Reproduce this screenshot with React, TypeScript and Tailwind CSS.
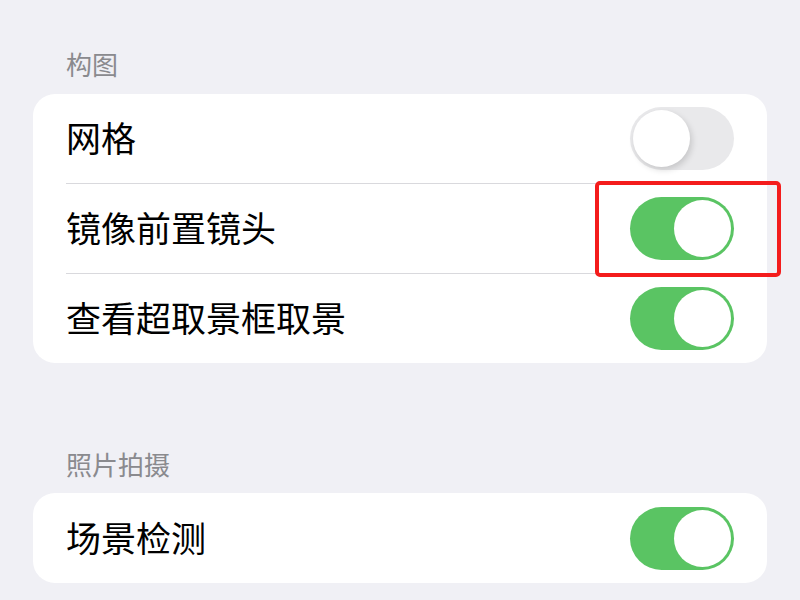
const font = { fontFamily: '"Noto Sans CJK SC", "Noto Sans", sans-serif' };

function Toggle({ on, highlight }: { on: boolean; highlight?: boolean }) {
  return (
    <div className="relative">
      <div
        className={
          "relative h-[63px] w-[104px] rounded-full " +
          (on ? "bg-[#5ac463]" : "bg-[#e9e9eb]")
        }
      >
        <div
          className={
            "absolute top-[3px] h-[57px] w-[57px] rounded-full bg-white " +
            (on ? "right-[3px]" : "left-[3px] shadow-[2px_3px_6px_rgba(0,0,0,0.15)]")
          }
        />
      </div>
      {highlight && (
        <div className="absolute -left-[35px] -right-[47px] -top-[16px] -bottom-[17px] rounded-[5px] border-4 border-[#f41c1c]" />
      )}
    </div>
  );
}

function Row({ label, on, last, highlight }: { label: string; on: boolean; last?: boolean; highlight?: boolean }) {
  return (
    <div className={"ml-[33px] " + (last ? "" : "border-b border-[#d9d9dd]")}>
      <div className="flex h-[89px] items-center justify-between pr-[33px]">
        <span className="pb-[4px] text-[35px] leading-none text-black">{label}</span>
        <Toggle on={on} highlight={highlight} />
      </div>
    </div>
  );
}

export default function App() {
  return (
    <div className="min-h-screen w-[800px] bg-[#f0f0f5] px-[33px] pt-[46px]" style={font}>
      {/* 构图 */}
      <div className="mb-[12px] pl-[33px] text-[26px] leading-[36px] text-[#8a8a8e]">构图</div>
      <div className="rounded-[22px] bg-white">
        <Row label="网格" on={false} />
        <Row label="镜像前置镜头" on highlight />
        <Row label="查看超取景框取景" on last />
      </div>

      {/* 照片拍摄 */}
      <div className="mb-[11px] mt-[83px] pl-[33px] text-[26px] leading-[36px] text-[#8a8a8e]">照片拍摄</div>
      <div className="rounded-[22px] bg-white">
        <div className="ml-[33px]">
          <div className="flex h-[90px] items-center justify-between pr-[33px]">
            <span className="pb-[4px] text-[35px] leading-none text-black">场景检测</span>
            <Toggle on />
          </div>
        </div>
      </div>
    </div>
  );
}
